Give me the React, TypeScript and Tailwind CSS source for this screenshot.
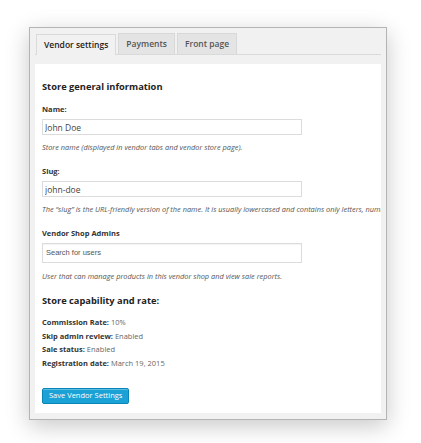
import React from 'react';

const font = { fontFamily: '"Open Sans", "Noto Sans", sans-serif' };

const Field: React.FC<{ label: string; value?: string; help: string }> = ({ label, value, help }) => (
  <div>
    <div className="text-[7.5px] font-bold text-[#333] leading-[12px]">{label}</div>
    <input
      readOnly
      value={value}
      className="mt-[4px] block h-[16px] w-[260px] border border-[#dcdcdc] bg-white px-[2px] text-[8.5px] text-[#444] outline-none"
    />
    <p className="mt-[7px] whitespace-nowrap text-[7.4px] italic text-[#555] leading-[10px]">{help}</p>
  </div>
);

export default function App() {
  return (
    <div className="min-h-[443px] w-[421px] bg-white pt-[27px] pl-[29px]" style={font}>
      <div className="w-[358px] border border-[#b4b4b4] bg-[#f1f1f1] px-[5px] pt-[5px] pb-[6px] shadow-[0_6px_22px_rgba(0,0,0,0.22)]">
        {/* Tabs */}
        <div className="flex items-end gap-[2px] border-b border-[#dadada] pl-[1px]">
          <div className="flex h-[21px] items-center border border-b-0 border-[#dadada] bg-[#f1f1f1] px-[7px] text-[8.5px] font-semibold text-[#222] -mb-px">
            Vendor settings
          </div>
          <div className="flex h-[21px] items-center border border-b-0 border-[#d8d8d8] bg-[#e4e4e4] px-[7px] text-[8.5px] font-semibold text-[#555]">
            Payments
          </div>
          <div className="flex h-[21px] items-center border border-b-0 border-[#d8d8d8] bg-[#e4e4e4] px-[7px] text-[8.5px] font-semibold text-[#555]">
            Front page
          </div>
        </div>

        {/* Panel */}
        <div className="mt-[9px] overflow-hidden bg-white pl-[7px] pt-[15px] pb-[9px]">
          <h2 className="text-[9.3px] font-bold text-[#222] leading-[16px]">Store general information</h2>
          <div className="mt-[8px] flex flex-col gap-[13px]">
            <Field
              label="Name:"
              value="John Doe"
              help="Store name (displayed in vendor tabs and vendor store page)."
            />
            <Field
              label="Slug:"
              value="john-doe"
              help={'The \u201cslug\u201d is the URL-friendly version of the name. It is usually lowercased and contains only letters, numbers, and hyphens.'}
            />
            <div>
              <div className="text-[7.5px] font-bold text-[#333] leading-[12px]">Vendor Shop Admins</div>
              <div
                className="mt-[4px] flex h-[20px] w-[260px] items-center border border-[#dcdcdc] bg-white px-[3px] text-[7.5px] text-[#555] shadow-[inset_0_1px_1px_rgba(0,0,0,0.05)]"
                style={{ fontFamily: '"Liberation Sans", Arial, sans-serif' }}
              >
                Search for users
              </div>
              <p className="mt-[8px] whitespace-nowrap text-[7.4px] italic text-[#555] leading-[10px]">
                User that can manage products in this vendor shop and view sale reports.
              </p>
            </div>
          </div>

          <h2 className="mt-[12px] text-[9.3px] font-bold text-[#222] leading-[16px]">Store capability and rate:</h2>
          <ul className="mt-[7px] flex flex-col gap-[1.7px] text-[7.5px] leading-[12px] text-[#666]">
            <li><span className="font-bold text-[#333]">Commission Rate:</span> 10%</li>
            <li><span className="font-bold text-[#333]">Skip admin review:</span> Enabled</li>
            <li><span className="font-bold text-[#333]">Sale status:</span> Enabled</li>
            <li><span className="font-bold text-[#333]">Registration date:</span> March 19, 2015</li>
          </ul>

          <button className="mt-[19px] h-[16px] rounded-[2px] border border-[#0a85b8] bg-[#1aa1d6] px-[6px] text-[7.5px] leading-none text-white shadow-[inset_0_1px_0_rgba(255,255,255,0.3)]">
            Save Vendor Settings
          </button>
        </div>
      </div>
    </div>
  );
}
